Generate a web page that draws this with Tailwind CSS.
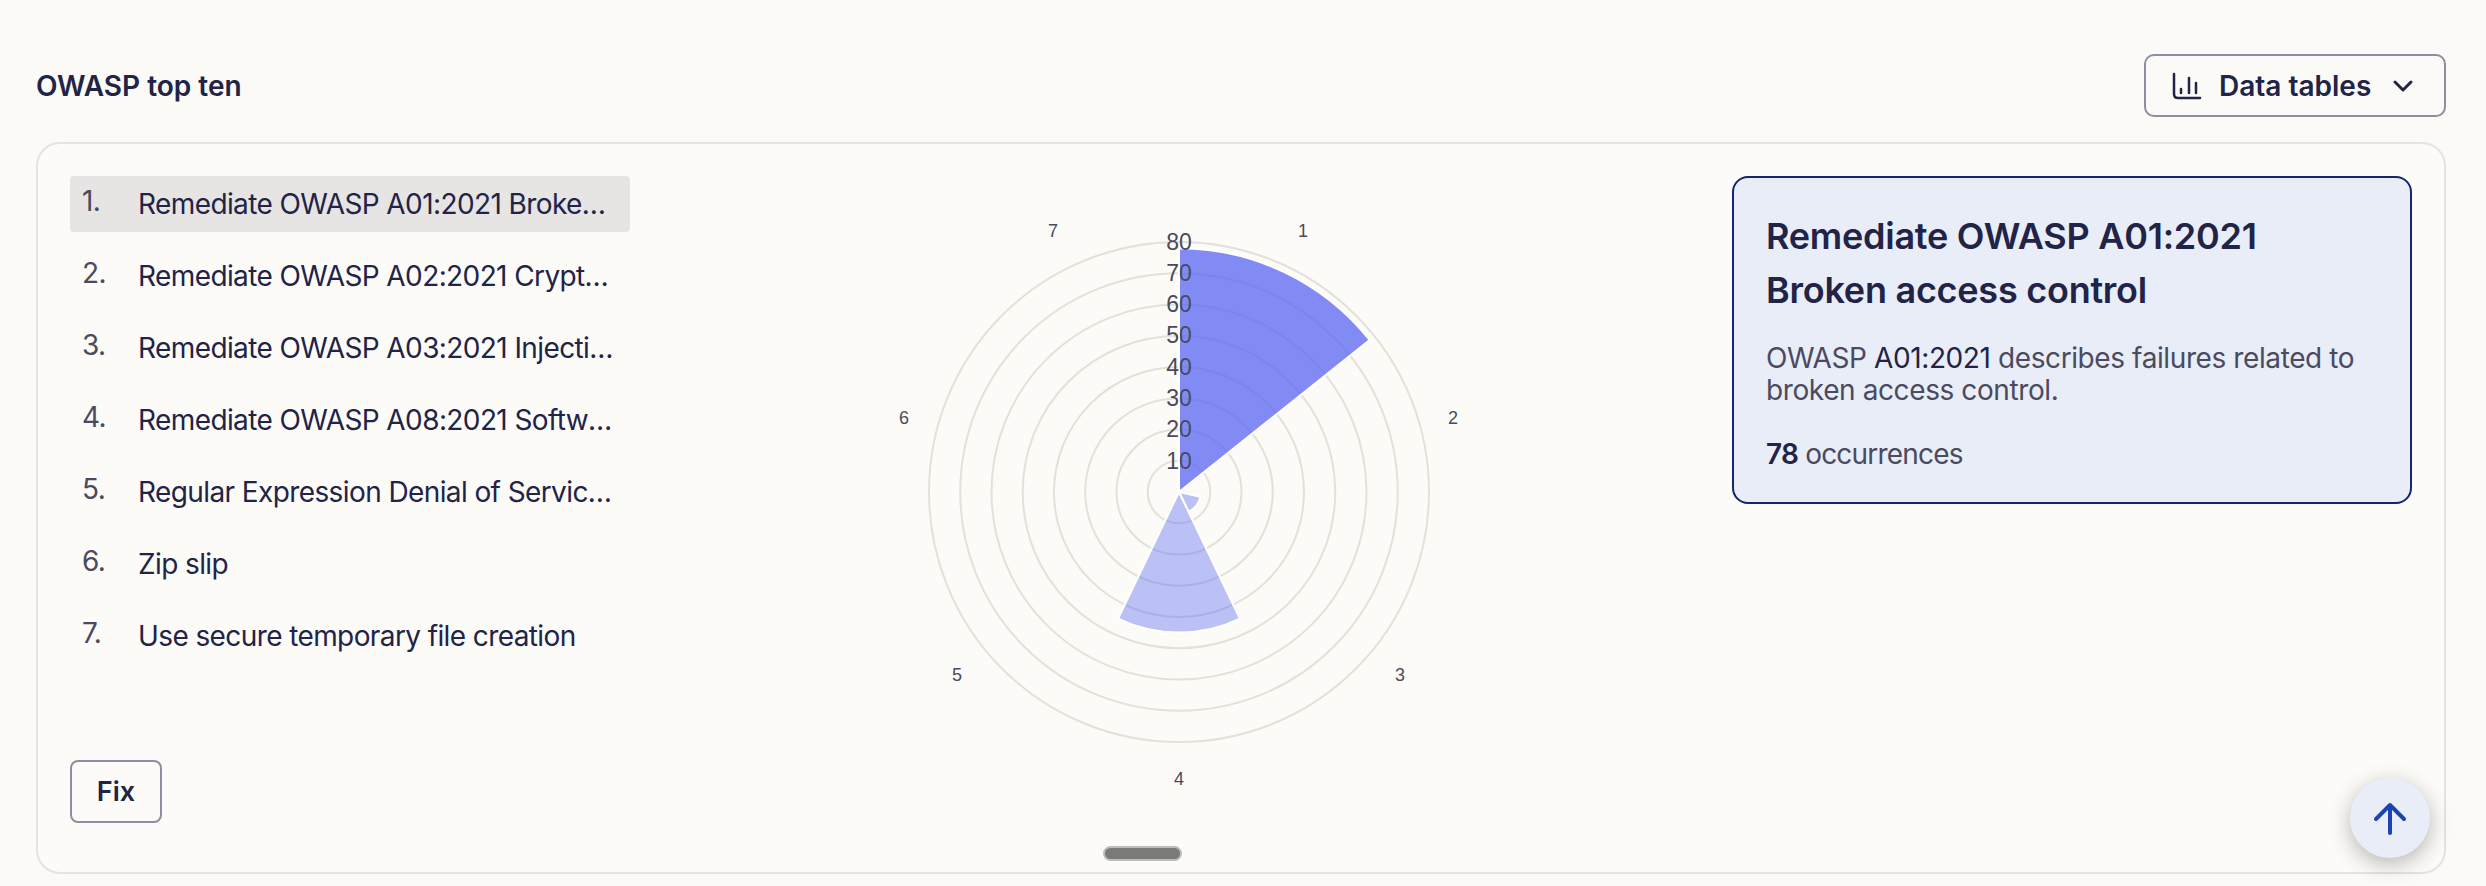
<!DOCTYPE html>
<html lang="en">
<head>
    <meta charset="UTF-8">
    <title>OWASP top ten</title>
    <script src="https://cdn.jsdelivr.net/npm/@tailwindcss/browser@4"></script>
</head>
<body class="bg-[#fbfaf7] font-[Inter,sans-serif] text-[#212347]">
<div class="relative h-[886px] w-[2486px] overflow-hidden pt-[54px]">
    <!-- Header -->
    <div class="flex items-center justify-between pl-[36px] pr-[40px]">
        <h2 class="text-[28px] font-semibold">OWASP top ten</h2>
        <button class="flex h-[63px] w-[302px] items-center rounded-[10px] border-2 border-[#8e8ea0] pl-[26px]">
            <svg class="h-[30px] w-[32px]" viewBox="0 0 32 30" fill="none" stroke="#212347" stroke-width="2.5" stroke-linecap="round">
                <path d="M2 3V23Q2 27 6 27H28"/>
                <path d="M9 18V22M17 7V22M24 12V22"/>
            </svg>
            <span class="ml-[15px] text-[28px] font-semibold">Data tables</span>
            <svg class="ml-[21px] h-[14px] w-[22px]" viewBox="0 0 22 14" fill="none" stroke="#212347" stroke-width="3" stroke-linecap="round" stroke-linejoin="round">
                <path d="M3 3L11 11L19 3"/>
            </svg>
        </button>
    </div>

    <!-- Card -->
    <div class="relative ml-[36px] mr-[40px] mt-[25px] flex h-[732px] items-start rounded-[24px] border-2 border-[#e4e3e1] bg-[#fcfbf7] pb-[49px] pl-[32px] pt-[32px]">
        <div class="flex h-full w-[560px] flex-col justify-between">
            <ol class="flex flex-col gap-[16px] text-[28px] tracking-[-0.6px]">
                <li class="flex h-[56px] items-center rounded-[4px] bg-[#e6e5e3] pl-[12px] pr-[11px]"><span class="mb-[6px] w-[56px] shrink-0 text-[#4a4a60]">1.</span><span class="truncate">Remediate OWASP A01:2021 Broken access control</span></li>
                <li class="flex h-[56px] items-center pl-[12px] pr-[11px]"><span class="mb-[6px] w-[56px] shrink-0 text-[#4a4a60]">2.</span><span class="truncate">Remediate OWASP A02:2021 Cryptographic failures</span></li>
                <li class="flex h-[56px] items-center pl-[12px] pr-[11px]"><span class="mb-[6px] w-[56px] shrink-0 text-[#4a4a60]">3.</span><span class="truncate">Remediate OWASP A03:2021 Injection</span></li>
                <li class="flex h-[56px] items-center pl-[12px] pr-[11px]"><span class="mb-[6px] w-[56px] shrink-0 text-[#4a4a60]">4.</span><span class="truncate">Remediate OWASP A08:2021 Software and data integrity</span></li>
                <li class="flex h-[56px] items-center pl-[12px] pr-[11px]"><span class="mb-[6px] w-[56px] shrink-0 text-[#4a4a60]">5.</span><span class="truncate">Regular Expression Denial of Service (ReDoS)</span></li>
                <li class="flex h-[56px] items-center pl-[12px] pr-[11px]"><span class="mb-[6px] w-[56px] shrink-0 text-[#4a4a60]">6.</span><span class="truncate">Zip slip</span></li>
                <li class="flex h-[56px] items-center pl-[12px] pr-[11px]"><span class="mb-[6px] w-[56px] shrink-0 text-[#4a4a60]">7.</span><span class="truncate">Use secure temporary file creation</span></li>
            </ol>
            <button class="h-[63px] w-[92px] rounded-[8px] border-2 border-[#8e8ea0] pt-[1px] text-[27px] font-semibold">Fix</button>
        </div>

        <!-- Polar chart -->
        <svg class="ml-[249px] h-[640px] w-[600px] shrink-0 font-['Liberation_Sans',sans-serif]" viewBox="0 0 600 640">
            <g fill="none" stroke="#e2e1db" stroke-width="2">
                <circle cx="300" cy="316" r="31.25"/>
                <circle cx="300" cy="316" r="62.5"/>
                <circle cx="300" cy="316" r="93.75"/>
                <circle cx="300" cy="316" r="125"/>
                <circle cx="300" cy="316" r="156.25"/>
                <circle cx="300" cy="316" r="187.5"/>
                <circle cx="300" cy="316" r="218.75"/>
                <circle cx="300" cy="316" r="250"/>
            </g>
            <g stroke="#ffffff" stroke-width="2" stroke-linejoin="round">
                <path d="M300 316V72.25A243.75 243.75 0 0 1 490.6 164Z" fill="#5f6af3" fill-opacity="0.78"/>
                <path d="M300 316L321.3 320.9A21.9 21.9 0 0 1 309.5 335.7Z" fill="#5f6af3" fill-opacity="0.41"/>
                <path d="M300 316L361 442.7A140.6 140.6 0 0 1 239 442.7Z" fill="#5f6af3" fill-opacity="0.41"/>
            </g>
            <g class="fill-[#4a4a5e] text-[23px]" text-anchor="middle" dominant-baseline="central">
                <text x="300" y="66">80</text>
                <text x="300" y="97">70</text>
                <text x="300" y="128">60</text>
                <text x="300" y="159">50</text>
                <text x="300" y="191">40</text>
                <text x="300" y="222">30</text>
                <text x="300" y="253">20</text>
                <text x="300" y="285">10</text>
            </g>
            <g class="fill-[#4a4a5e] text-[18px]" text-anchor="middle" dominant-baseline="central">
                <text x="424" y="55">1</text>
                <text x="574" y="242">2</text>
                <text x="521" y="499">3</text>
                <text x="300" y="603">4</text>
                <text x="78" y="499">5</text>
                <text x="25" y="242">6</text>
                <text x="174" y="55">7</text>
            </g>
        </svg>

        <!-- Detail card -->
        <div class="absolute left-[1694px] top-[32px] w-[680px] rounded-[16px] border-2 border-[#14246e] bg-[#e9edf7] px-[32px] pb-[32px] pt-[31px]">
            <h3 class="text-[36px] font-semibold leading-[54px] tracking-[-0.25px]">Remediate OWASP A01:2021<br>Broken access control</h3>
            <p class="mt-[25px] text-[28px] leading-[32px] tracking-[-0.4px] text-[#4a4a60]">OWASP <span class="text-[#212347]">A01:2021</span> describes failures related to broken access control.</p>
            <p class="mt-[32px] text-[28px] leading-[32px] tracking-[-0.8px] text-[#4a4a60]"><span class="font-semibold text-[#212347]">78</span> occurrences</p>
        </div>

        <!-- Scroll handle -->
        <div class="absolute bottom-[11px] left-[1065px] h-[15px] w-[79px] rounded-full border-2 border-[#bdbdbb] bg-[#7a7a78]"></div>
    </div>

    <!-- Back to top -->
    <button class="absolute left-[2350px] top-[778px] flex h-[80px] w-[80px] items-center justify-center rounded-full bg-[#e9edf7] shadow-[0_6px_22px_rgba(0,0,0,0.28)]">
        <svg class="h-[40px] w-[40px]" viewBox="0 0 40 40" fill="none" stroke="#1a44b0" stroke-width="4" stroke-linecap="round" stroke-linejoin="round">
            <path d="M20 35V7M6 21L20 7L34 21"/>
        </svg>
    </button>
</div>
</body>
</html>
